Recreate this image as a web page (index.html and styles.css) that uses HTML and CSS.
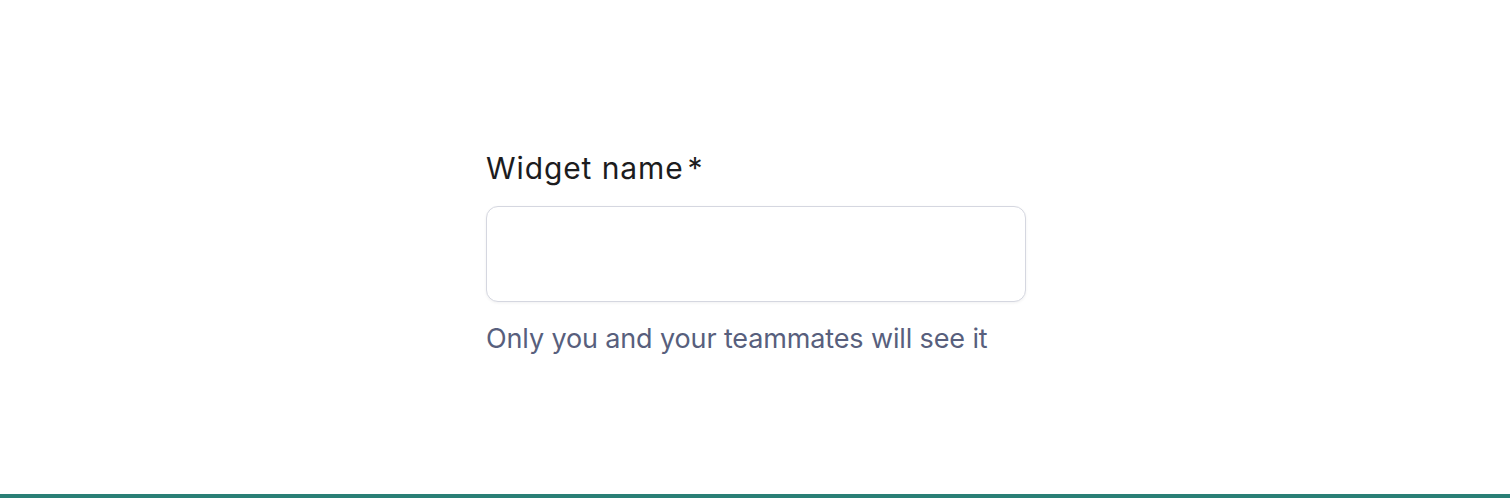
FILE: index.html
```html
<!DOCTYPE html>
<html lang="en">
<head>
<meta charset="utf-8">
<link rel="stylesheet" href="styles.css">
</head>
<body>
<main class="page">
  <div class="field">
    <label class="label" for="widget-name">Widget name<span class="req">*</span></label>
    <input class="input" id="widget-name" type="text">
    <p class="help">Only you and your teammates will see it</p>
  </div>
</main>
<div class="bar"></div>
</body>
</html>
```
FILE: styles.css
```css
html, body {
  margin: 0;
  padding: 0;
  background: #ffffff;
}
body {
  font-family: Inter, "Noto Sans", sans-serif;
  height: 498px;
  display: flex;
  flex-direction: column;
}
.page {
  flex: 1;
  display: flex;
  justify-content: center;
  padding-top: 148px;
  padding-left: 2px;
}
.field {
  width: 540px;
  display: flex;
  flex-direction: column;
}
.label {
  font-size: 30px;
  line-height: 40px;
  color: #1c1c1e;
  font-weight: 400;
  letter-spacing: 0.9px;
}
.req {
  margin-left: 4px;
}
.input {
  margin-top: 18px;
  box-sizing: border-box;
  height: 96px;
  width: 540px;
  border: 1px solid #d5d7e0;
  border-radius: 12px;
  box-shadow: 0 1px 3px rgba(16, 24, 40, 0.06);
  background: #fff;
  outline: none;
  font: inherit;
}
.help {
  margin: 19px 0 0;
  font-size: 27px;
  line-height: 36px;
  color: #585f7d;
  letter-spacing: -0.13px;
}
.bar {
  height: 4px;
  background: #2a7f76;
}
```
